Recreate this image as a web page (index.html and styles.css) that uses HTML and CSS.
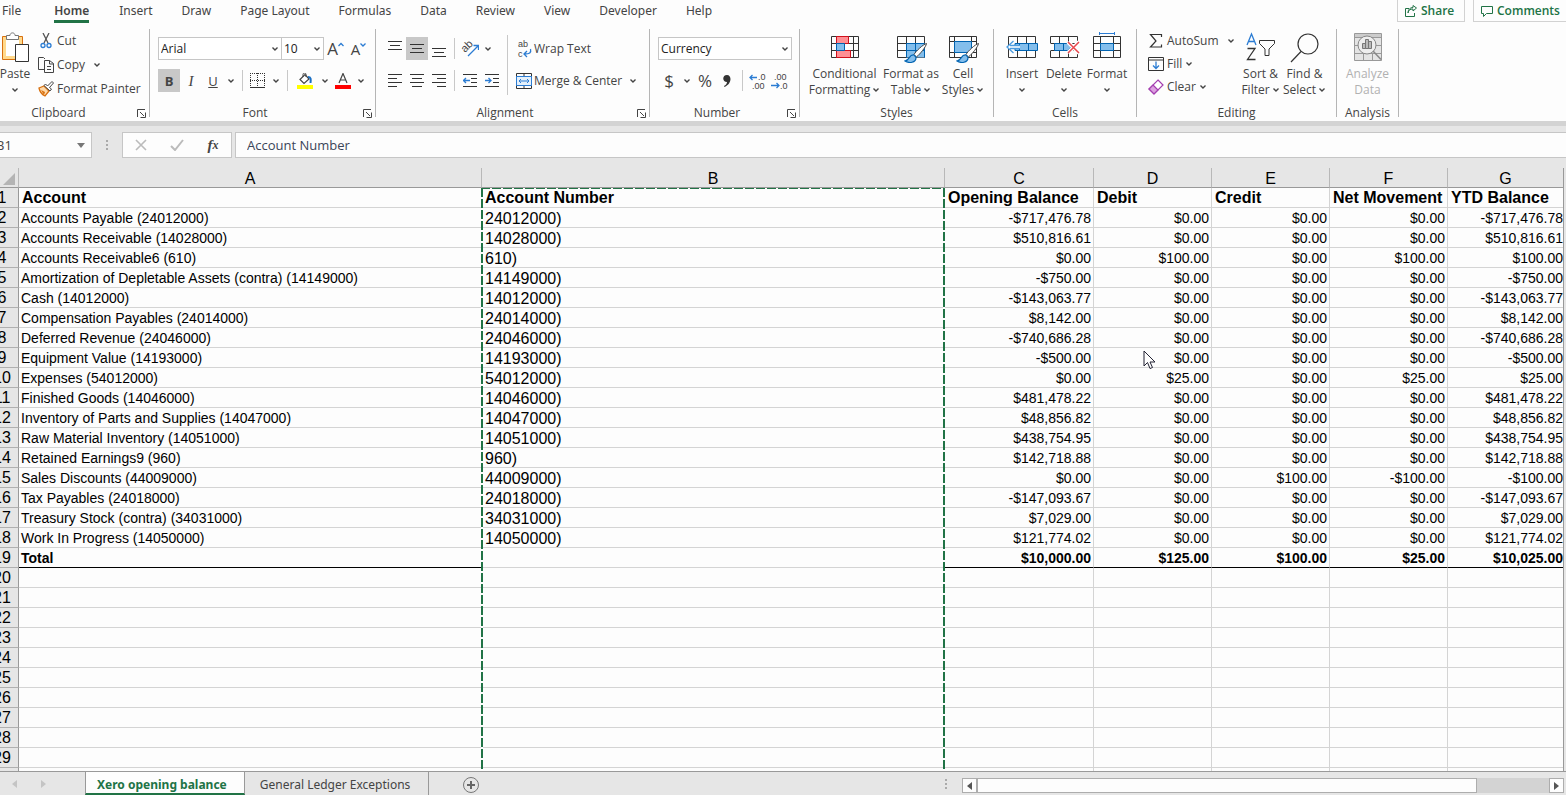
FILE: index.html
```html
<!DOCTYPE html>
<html lang="en">
<head>
    <meta charset="UTF-8">
    <meta name="viewport" content="width=device-width, initial-scale=1.0">
    <title>Xero opening balance</title>
    <link rel="stylesheet" href="styles.css">
</head>
<body>

    <!-- Shared icons -->
    <svg class="sprite" aria-hidden="true">
        <symbol id="chevron" viewBox="0 0 8 8"><path d="M1.5 2.5L4 5l2.5-2.5" fill="none" stroke="#444" stroke-width="1.4"/></symbol>
        <symbol id="launcher" viewBox="0 0 9 9"><path d="M.5 8V.5H8M3 3l4 4M8.500 3.500v5h-5" fill="none" stroke="#444"/></symbol>
        <symbol id="brush" viewBox="0 0 24 20"><path d="M22.500.5C19 1.500 12 8 10 11.500l2.500 2.500C16 11 22 4 22.500.5z" fill="#fff" stroke="#444"/><path d="M10 12c-5-1-4 5-9 6 4 2.500 11 2 11-3.500z" fill="#83beec" stroke="#0063b1" stroke-width="1.2"/></symbol>
    </svg>

    <header class="tab-bar">
        <nav class="tabs">
            <a href="#">File</a>
            <a href="#" class="active">Home</a>
            <a href="#">Insert</a>
            <a href="#">Draw</a>
            <a href="#">Page Layout</a>
            <a href="#">Formulas</a>
            <a href="#">Data</a>
            <a href="#">Review</a>
            <a href="#">View</a>
            <a href="#">Developer</a>
            <a href="#">Help</a>
        </nav>
        <div class="actions">
            <button type="button" class="share">
                <svg width="12" height="12" viewBox="0 0 12 12" fill="none" stroke="#217346"><path d="M4 3.500H.5v8h9V8M3 8c.5-3 2-4 5-4V6l3.500-3L8 .5v2C5 2.500 3 4.500 3 8z"/></svg>
                Share
            </button>
            <button type="button" class="comments">
                <svg width="12" height="12" viewBox="0 0 12 12" fill="none" stroke="#217346"><path d="M.5 1.500h11v7h-6l-3 3v-3h-2z"/></svg>
                Comments
            </button>
        </div>
    </header>

    <div class="ribbon">
        <section class="group clipboard">
            <div class="group-body">
                <button type="button" class="big paste">
                    <svg width="28" height="32" viewBox="0 0 28 32"><path d="M1.500 4.500h20v23h-20z" fill="#ffd98c" stroke="#d8700f"/><path d="M5 8h13v16H5z" fill="#fff"/><path d="M5.500 7.500v-4H9c0-3.500 5-3.500 5 0h3.500v4z" fill="#fff" stroke="#777"/><path d="M14.500 12.500h13v17h-13z" fill="#fff" stroke="#333"/></svg>
                    <span>Paste</span>
                    <svg class="chev"><use href="#chevron"/></svg>
                </button>
                <div class="stack">
                    <button type="button" class="row-btn">
                        <svg width="16" height="16" viewBox="0 0 16 16" fill="none"><path d="M5 0l5 10M11 0L6 10" stroke="#555" stroke-width="1.300"/><circle cx="5" cy="12.500" r="2" stroke="#2b7cd3" stroke-width="1.300"/><circle cx="11" cy="12.500" r="2" stroke="#2b7cd3" stroke-width="1.300"/></svg>
                        Cut
                    </button>
                    <button type="button" class="row-btn">
                        <svg width="16" height="16" viewBox="0 0 16 16" fill="none" stroke="#444"><path d="M6 12.500H.5V.5h5L7 2"/><path d="M6.500 3.500h5l4 3v9h-9zM11.500 3.500v3.500h4M9 9.500h4M9 12.500h4"/></svg>
                        Copy
                        <svg class="chev"><use href="#chevron"/></svg>
                    </button>
                    <button type="button" class="row-btn">
                        <svg width="16" height="16" viewBox="0 0 16 16"><path d="M1 7l5-2 5 5-4 5c-2-1-5-3-6-8z" fill="#ffd9a8" stroke="#d8700f" stroke-width="1.300"/><path d="M3 9l4 2-1 3z" fill="#d8700f"/><path d="M6 4.500l6 5.500 1.500-2-2-1.500L15.500 2 14 .5 9.500 5 7.500 3z" fill="#fff" stroke="#444"/></svg>
                        Format Painter
                    </button>
                </div>
            </div>
            <div class="group-label"><span>Clipboard</span><button type="button" class="launcher" aria-label="Clipboard settings"><svg width="9" height="9"><use href="#launcher"/></svg></button></div>
        </section>

        <section class="group font">
            <div class="group-body lines">
                <div class="line">
                    <label class="combo font-name"><select aria-label="Font"><option>Arial</option></select><svg class="chev"><use href="#chevron"/></svg></label>
                    <label class="combo font-size"><select aria-label="Font size"><option>10</option></select><svg class="chev"><use href="#chevron"/></svg></label>
                    <button type="button" class="tool grow"><span class="letter-big">A</span><svg width="6" height="14" viewBox="0 0 6 14"><path d="M.5 4L3 1.500 5.500 4" fill="none" stroke="#2b7cd3" stroke-width="1.300"/></svg></button>
                    <button type="button" class="tool grow"><span class="letter-mid">A</span><svg width="6" height="14" viewBox="0 0 6 14"><path d="M.5 1.500L3 4l2.500-2.500" fill="none" stroke="#2b7cd3" stroke-width="1.300"/></svg></button>
                </div>
                <div class="line">
                    <button type="button" class="tool pressed bold">B</button>
                    <button type="button" class="tool italic">I</button>
                    <button type="button" class="tool underline">U</button>
                    <button type="button" class="drop" aria-label="Underline options"><svg class="chev"><use href="#chevron"/></svg></button>
                    <span class="sep"></span>
                    <button type="button" class="tool" aria-label="Borders"><svg width="16" height="16" viewBox="0 0 16 16" fill="none" stroke="#333"><path d="M0 .5h15M0 7.500h15" stroke-dasharray="1 1"/><path d="M.5 0v14M7.500 0v14M14.500 0v14" stroke-dasharray="1 1"/><path d="M0 14.500h15"/></svg></button>
                    <button type="button" class="drop" aria-label="Border options"><svg class="chev"><use href="#chevron"/></svg></button>
                    <span class="sep"></span>
                    <button type="button" class="tool fill-color" aria-label="Fill color"><svg width="16" height="16" viewBox="0 0 16 16"><path d="M3 6.500l5-5 4 4.500-5 4.500z" fill="#fff" stroke="#444" stroke-width="1.200"/><path d="M6 4V1.500c0-2 3-2 3 0V4" fill="none" stroke="#444"/><path d="M11 4c3 0 3 2 2.500 6" fill="none" stroke="#1a6fc4" stroke-width="2"/><path d="M0 12h16v4H0z" fill="#ff0"/></svg></button>
                    <button type="button" class="drop" aria-label="Fill options"><svg class="chev"><use href="#chevron"/></svg></button>
                    <button type="button" class="tool" aria-label="Font color"><svg width="16" height="16" viewBox="0 0 16 16"><path d="M4 10L8 .5 12 10M5.500 7h5" fill="none" stroke="#444" stroke-width="1.200"/><path d="M0 12h16v4H0z" fill="#f00"/></svg></button>
                    <button type="button" class="drop" aria-label="Font color options"><svg class="chev"><use href="#chevron"/></svg></button>
                </div>
            </div>
            <div class="group-label"><span>Font</span><button type="button" class="launcher" aria-label="Font settings"><svg width="9" height="9"><use href="#launcher"/></svg></button></div>
        </section>

        <section class="group alignment">
            <div class="group-body align-body">
                <div class="lines">
                    <div class="line">
                        <button type="button" class="tool" aria-label="Top align"><svg width="14" height="16" viewBox="0 0 14 16" stroke="#333"><path d="M0 .5h14M2 4.500h10M0 8.500h14"/></svg></button>
                        <button type="button" class="tool pressed" aria-label="Middle align"><svg width="14" height="16" viewBox="0 0 14 16" stroke="#333"><path d="M0 3.500h14M2 7.500h10M0 11.500h14"/></svg></button>
                        <button type="button" class="tool" aria-label="Bottom align"><svg width="14" height="16" viewBox="0 0 14 16" stroke="#333"><path d="M0 7.500h14M2 11.500h10M0 15.500h14"/></svg></button>
                        <span class="sep"></span>
                        <button type="button" class="tool" aria-label="Orientation"><svg width="18" height="18" viewBox="0 0 18 18" fill="none"><text x="4" y="13" transform="rotate(-45 4 13)" class="ab-icon">ab</text><path d="M7 16L17 6M12.500 5.500h5V10" stroke="#2b7cd3" stroke-width="1.300"/></svg></button>
                        <button type="button" class="drop" aria-label="Orientation options"><svg class="chev"><use href="#chevron"/></svg></button>
                    </div>
                    <div class="line">
                        <button type="button" class="tool" aria-label="Align left"><svg width="14" height="16" viewBox="0 0 14 16" stroke="#333"><path d="M0 1.500h14M0 5.500h9M0 9.500h14M0 13.500h9"/></svg></button>
                        <button type="button" class="tool" aria-label="Center"><svg width="14" height="16" viewBox="0 0 14 16" stroke="#333"><path d="M0 1.500h14M2 5.500h10M0 9.500h14M2 13.500h10"/></svg></button>
                        <button type="button" class="tool" aria-label="Align right"><svg width="14" height="16" viewBox="0 0 14 16" stroke="#333"><path d="M0 1.500h14M5 5.500h9M0 9.500h14M5 13.500h9"/></svg></button>
                        <span class="sep"></span>
                        <button type="button" class="tool" aria-label="Decrease indent"><svg width="14" height="16" viewBox="0 0 14 16" fill="none" stroke="#333"><path d="M0 1.500h14M8 5.500h6M8 9.500h6M0 13.500h14"/><path d="M7 7.500H.5M3 5L.5 7.500 3 10" stroke="#2b7cd3" stroke-width="1.300"/></svg></button>
                        <button type="button" class="tool" aria-label="Increase indent"><svg width="14" height="16" viewBox="0 0 14 16" fill="none" stroke="#333"><path d="M0 1.500h14M8 5.500h6M8 9.500h6M0 13.500h14"/><path d="M0 7.500h6M3.500 5L6 7.500 3.500 10" stroke="#2b7cd3" stroke-width="1.300"/></svg></button>
                    </div>
                </div>
                <span class="sep tall"></span>
                <div class="lines wrap-lines">
                    <button type="button" class="row-btn">
                        <svg width="16" height="20" viewBox="0 0 16 20" fill="none"><text x="2" y="8" class="ab-icon small">ab</text><text x="2" y="18" class="ab-icon small">c</text><path d="M14.500 10c1 4-1 5-6 5M11 12l-3 3 3 3" stroke="#2b7cd3" stroke-width="1.300"/></svg>
                        Wrap Text
                    </button>
                    <button type="button" class="row-btn">
                        <svg width="16" height="16" viewBox="0 0 16 16" fill="none" stroke="#333"><path d="M.5.5h15v15H.5zM8 .5v3M8 12v3.500"/><path d="M.5 3.500h15v9H.5z" stroke="#2b7cd3" fill="#e4f0fb"/><path d="M3 8h10M5 6L3 8l2 2M11 6l2 2-2 2" stroke="#2b7cd3"/></svg>
                        Merge &amp; Center
                        <svg class="chev"><use href="#chevron"/></svg>
                    </button>
                </div>
            </div>
            <div class="group-label"><span>Alignment</span><button type="button" class="launcher" aria-label="Alignment settings"><svg width="9" height="9"><use href="#launcher"/></svg></button></div>
        </section>

        <section class="group number">
            <div class="group-body lines">
                <div class="line">
                    <label class="combo number-format"><select aria-label="Number format"><option>Currency</option></select><svg class="chev"><use href="#chevron"/></svg></label>
                </div>
                <div class="line">
                    <button type="button" class="tool sign">$</button>
                    <button type="button" class="drop" aria-label="Accounting options"><svg class="chev"><use href="#chevron"/></svg></button>
                    <button type="button" class="tool sign">%</button>
                    <button type="button" class="tool" aria-label="Comma style"><svg width="8" height="14" viewBox="0 0 8 14"><path d="M4 1c5 0 5 9-2.500 12l-.5-1c2-1 3-2.500 3-4C-1 8-1 1 4 1z" fill="#333"/></svg></button>
                    <span class="sep"></span>
                    <button type="button" class="tool" aria-label="Increase decimal"><svg width="18" height="18" viewBox="0 0 18 18" fill="none"><text x="9" y="8" class="dec-icon">.0</text><text x="3" y="17" class="dec-icon">.00</text><path d="M8 5.500H1M3.500 3L1 5.500 3.500 8" stroke="#2b7cd3" stroke-width="1.300"/></svg></button>
                    <button type="button" class="tool" aria-label="Decrease decimal"><svg width="18" height="18" viewBox="0 0 18 18" fill="none"><text x="3" y="8" class="dec-icon">.00</text><text x="9" y="17" class="dec-icon">.0</text><path d="M0 13.500h8M5.500 11L8 13.500 5.500 16" stroke="#2b7cd3" stroke-width="1.300"/></svg></button>
                </div>
            </div>
            <div class="group-label"><span>Number</span><button type="button" class="launcher" aria-label="Number settings"><svg width="9" height="9"><use href="#launcher"/></svg></button></div>
        </section>

        <section class="group styles">
            <div class="group-body">
                <button type="button" class="big conditional">
                    <svg width="28" height="32" viewBox="0 0 28 32" fill="none"><path d="M.5 4.500h27v21H.5zM.5 11.500h27M.5 18.500h27M5.500 4.500v21M22.500 4.500v21" stroke="#333"/><path d="M5.500 4.500h12v7h-12zM5.500 18.500h14v7h-14z" fill="#ff8f94" stroke="#d1101c"/><path d="M5.500 11.500h8v7h-8z" fill="#83beec" stroke="#0063b1"/></svg>
                    <span>Conditional</span>
                    <span>Formatting <svg class="chev"><use href="#chevron"/></svg></span>
                </button>
                <button type="button" class="big format-table">
                    <svg width="32" height="32" viewBox="0 0 32 32" fill="none"><path d="M2.500 4.500h27v21h-27zM2.500 11.500h27M2.500 18.500h27M11.500 4.500v21M20.500 4.500v21" stroke="#333"/><path d="M11.500 11.500h18v14h-18z" fill="#83beec"/><path d="M11.500 25.500v-14h18v14M11.500 18.500h18M20.500 11.500v14" stroke="#0063b1"/><use href="#brush" x="9" y="11" width="24" height="20"/></svg>
                    <span>Format as</span>
                    <span>Table <svg class="chev"><use href="#chevron"/></svg></span>
                </button>
                <button type="button" class="big cell-styles">
                    <svg width="32" height="32" viewBox="0 0 32 32" fill="none"><path d="M2.500 4.500h27v21h-27zM2.500 9.500h27M2.500 20.500h27M7.500 4.500v21M24.500 4.500v21" stroke="#333"/><path d="M7.500 9.500h17v11h-17z" fill="#83beec" stroke="#0063b1"/><use href="#brush" x="9" y="11" width="24" height="20"/></svg>
                    <span>Cell</span>
                    <span>Styles <svg class="chev"><use href="#chevron"/></svg></span>
                </button>
            </div>
            <div class="group-label"><span>Styles</span></div>
        </section>

        <section class="group cells">
            <div class="group-body">
                <button type="button" class="big">
                    <svg width="32" height="32" viewBox="0 0 32 32" fill="none"><path d="M2.500 4.500h27v21h-27zM11.500 4.500v21M20.500 4.500v21" stroke="#333"/><path d="M9 11.500h22.500v7H9z" fill="#83beec" stroke="#0063b1"/><path d="M13.500 11.500v7M22.500 11.500v7" stroke="#0063b1"/><path d="M14 13H7V9L.5 15 7 21v-4h7z" fill="#fff"/><path d="M14 13.500H4M14 16.500H4M7.500 9L1 15l6.500 6" stroke="#4a9be0" stroke-width="1.300"/></svg>
                    <span>Insert</span>
                    <svg class="chev"><use href="#chevron"/></svg>
                </button>
                <button type="button" class="big">
                    <svg width="32" height="32" viewBox="0 0 32 32" fill="none"><path d="M2.500 11V4.500h27V11M2.500 19v6.500h27V19M2.500 11.500h27M2.500 18.500h27M11.500 4.500v21M20.500 4.500v21" stroke="#333"/><path d="M6.500 11.500H20l3 3.500-3 3.500H6.500z" fill="#83beec" stroke="#0063b1"/><path d="M15.500 11.500v7" stroke="#0063b1"/><path d="M20 10l11 11M31 10L20 21" stroke="#fff" stroke-width="4"/><path d="M20 10l11 11M31 10L20 21" stroke="#e8474c" stroke-width="1.500"/></svg>
                    <span>Delete</span>
                    <svg class="chev"><use href="#chevron"/></svg>
                </button>
                <button type="button" class="big format-cells">
                    <svg width="28" height="32" viewBox="0 0 28 32" fill="none"><path d="M.5 4.500h27v21H.5zM.5 11.500h27M.5 18.500h27M7.500 4.500v21M20.500 4.500v21" stroke="#333"/><path d="M7.500 11.500h13v7h-13z" fill="#83beec" stroke="#0063b1"/><path d="M6.500 0v3M21.500 0v3M6.500 1.500h15" stroke="#2b7cd3"/></svg>
                    <span>Format</span>
                    <svg class="chev"><use href="#chevron"/></svg>
                </button>
            </div>
            <div class="group-label"><span>Cells</span></div>
        </section>

        <section class="group editing">
            <div class="group-body">
                <div class="stack">
                    <button type="button" class="row-btn">
                        <svg width="16" height="16" viewBox="0 0 16 16" fill="none" stroke="#333" stroke-width="1.200"><path d="M13.500 4V1.500h-11L8 8l-5.500 6h11v-2.500"/></svg>
                        AutoSum
                        <svg class="chev"><use href="#chevron"/></svg>
                    </button>
                    <button type="button" class="row-btn tight">
                        <svg width="16" height="16" viewBox="0 0 16 16" fill="none"><path d="M.5 1.500h15v13H.5zM.5 4h15" stroke="#333"/><path d="M8 5.500V12M5 9.500l3 3 3-3" stroke="#2b7cd3" stroke-width="1.300"/></svg>
                        Fill
                        <svg class="chev"><use href="#chevron"/></svg>
                    </button>
                    <button type="button" class="row-btn tight">
                        <svg width="16" height="16" viewBox="0 0 16 16" stroke="#a43fb0" stroke-width="1.200"><path d="M10 1l5 5-9 9-5-5z" fill="#fff"/><path d="M5 6l5 5-4 4-5-5z" fill="#dca0e0"/></svg>
                        Clear
                        <svg class="chev"><use href="#chevron"/></svg>
                    </button>
                </div>
                <button type="button" class="big sort">
                    <svg width="30" height="32" viewBox="0 0 30 32" fill="none"><path d="M1 13L5.500 2 10 13M2.500 9.500h6" stroke="#2b7cd3" stroke-width="1.300"/><path d="M1.500 16.500H9L1.500 27.500h8" stroke="#333" stroke-width="1.300"/><path d="M13.500 8.500h15v3L23 17v6.500h-4V17l-5.500-5.500z" stroke="#333"/></svg>
                    <span>Sort &amp;</span>
                    <span>Filter <svg class="chev"><use href="#chevron"/></svg></span>
                </button>
                <button type="button" class="big find">
                    <svg width="30" height="32" viewBox="0 0 30 32" fill="none" stroke="#333" stroke-width="1.200"><circle cx="18" cy="12" r="10"/><path d="M11 19.500L1 30"/></svg>
                    <span>Find &amp;</span>
                    <span>Select <svg class="chev"><use href="#chevron"/></svg></span>
                </button>
            </div>
            <div class="group-label"><span>Editing</span></div>
        </section>

        <section class="group analysis">
            <div class="group-body">
                <button type="button" class="big" disabled>
                    <svg width="28" height="32" viewBox="0 0 28 32" fill="none" stroke="#999"><path d="M.5 1.500h27v27H.5z" fill="#e4e4e4"/><path d="M1 2h26v3H1z" fill="#ccc" stroke="none"/><path d="M.5 5.500h27M.5 13.500h27M.5 21.500h27M9.500 21v7M18.500 21v7"/><circle cx="13" cy="13" r="9" fill="#eee" stroke="#888"/><path d="M19 19l8 8.500" stroke="#888" stroke-width="1.500"/><path d="M8.500 11.500h3v5h-3zM11.500 7.500h3v9h-3zM14.500 9.500h3v7h-3z" fill="#bbb" stroke="#777"/></svg>
                    <span>Analyze</span>
                    <span>Data</span>
                </button>
            </div>
            <div class="group-label"><span>Analysis</span></div>
        </section>
    </div>

    <div class="formula-bar">
        <button type="button" class="name-box"><span>B1</span><svg width="8" height="5" viewBox="0 0 8 5"><path d="M0 0h8L4 5z" fill="#777"/></svg></button>
        <span class="dots"></span>
        <div class="formula-tools">
            <button type="button" aria-label="Cancel"><svg width="12" height="12" viewBox="0 0 12 12"><path d="M1 1l10 10M11 1L1 11" stroke="#bbb" stroke-width="1.600"/></svg></button>
            <button type="button" aria-label="Enter"><svg width="14" height="12" viewBox="0 0 14 12"><path d="M1 7l4 4 8-10" fill="none" stroke="#bbb" stroke-width="2"/></svg></button>
            <button type="button" class="fx">f<small>x</small></button>
        </div>
        <input type="text" class="formula" aria-label="Formula" value="Account Number">
    </div>

    <main class="sheet">
        <table>
            <colgroup>
                <col class="col-row"><col><col><col class="col-c"><col class="col-amount"><col class="col-amount"><col class="col-amount"><col class="col-g">
            </colgroup>
            <thead>
                <tr>
                    <th class="corner"><svg width="12" height="12" viewBox="0 0 12 12"><path d="M12 0v12H0z" fill="#b4b4b4"/></svg></th>
                    <th>A</th><th>B</th><th>C</th><th>D</th><th>E</th><th>F</th><th>G</th>
                </tr>
            </thead>
            <tbody id="rows"></tbody>
        </table>
        <svg class="pointer" width="13" height="20" viewBox="0 0 13 20"><path d="M1 1v15l3.500-3.500L7 18.500l2.500-1L7 12h5z" fill="#fff" stroke="#223"/></svg>
    </main>

    <footer class="sheet-bar">
        <div class="sheet-nav">
            <button type="button" aria-label="Previous sheet"><svg width="5" height="8" viewBox="0 0 5 8"><path d="M5 0v8L0 4z" fill="#c4c4c4"/></svg></button>
            <button type="button" aria-label="Next sheet"><svg width="5" height="8" viewBox="0 0 5 8"><path d="M0 0v8l5-4z" fill="#c4c4c4"/></svg></button>
        </div>
        <a href="#" class="sheet-tab active">Xero opening balance</a>
        <a href="#" class="sheet-tab">General Ledger Exceptions</a>
        <button type="button" class="add-sheet" aria-label="New sheet"><svg width="16" height="16" viewBox="0 0 16 16"><circle cx="8" cy="8" r="7.500" fill="none" stroke="#777"/><path d="M8 4v8M4 8h8" stroke="#666" stroke-width="2"/></svg></button>
        <span class="dots"></span>
        <div class="scroll">
            <button type="button" aria-label="Scroll left"><svg width="5" height="8" viewBox="0 0 5 8"><path d="M5 0v8L0 4z" fill="#555"/></svg></button>
            <div class="track"><div class="thumb"></div></div>
            <button type="button" aria-label="Scroll right"><svg width="5" height="8" viewBox="0 0 5 8"><path d="M0 0v8l5-4z" fill="#555"/></svg></button>
        </div>
    </footer>

    <script>
        const rows = [
            ['Account', 'Account Number', 'Opening Balance', 'Debit', 'Credit', 'Net Movement', 'YTD Balance'],
            ['Accounts Payable (24012000)', '24012000)', '-$717,476.78', '$0.00', '$0.00', '$0.00', '-$717,476.78'],
            ['Accounts Receivable (14028000)', '14028000)', '$510,816.61', '$0.00', '$0.00', '$0.00', '$510,816.61'],
            ['Accounts Receivable6 (610)', '610)', '$0.00', '$100.00', '$0.00', '$100.00', '$100.00'],
            ['Amortization of Depletable Assets (contra) (14149000)', '14149000)', '-$750.00', '$0.00', '$0.00', '$0.00', '-$750.00'],
            ['Cash (14012000)', '14012000)', '-$143,063.77', '$0.00', '$0.00', '$0.00', '-$143,063.77'],
            ['Compensation Payables (24014000)', '24014000)', '$8,142.00', '$0.00', '$0.00', '$0.00', '$8,142.00'],
            ['Deferred Revenue (24046000)', '24046000)', '-$740,686.28', '$0.00', '$0.00', '$0.00', '-$740,686.28'],
            ['Equipment Value (14193000)', '14193000)', '-$500.00', '$0.00', '$0.00', '$0.00', '-$500.00'],
            ['Expenses (54012000)', '54012000)', '$0.00', '$25.00', '$0.00', '$25.00', '$25.00'],
            ['Finished Goods (14046000)', '14046000)', '$481,478.22', '$0.00', '$0.00', '$0.00', '$481,478.22'],
            ['Inventory of Parts and Supplies (14047000)', '14047000)', '$48,856.82', '$0.00', '$0.00', '$0.00', '$48,856.82'],
            ['Raw Material Inventory (14051000)', '14051000)', '$438,754.95', '$0.00', '$0.00', '$0.00', '$438,754.95'],
            ['Retained Earnings9 (960)', '960)', '$142,718.88', '$0.00', '$0.00', '$0.00', '$142,718.88'],
            ['Sales Discounts (44009000)', '44009000)', '$0.00', '$0.00', '$100.00', '-$100.00', '-$100.00'],
            ['Tax Payables (24018000)', '24018000)', '-$147,093.67', '$0.00', '$0.00', '$0.00', '-$147,093.67'],
            ['Treasury Stock (contra) (34031000)', '34031000)', '$7,029.00', '$0.00', '$0.00', '$0.00', '$7,029.00'],
            ['Work In Progress (14050000)', '14050000)', '$121,774.02', '$0.00', '$0.00', '$0.00', '$121,774.02'],
            ['Total', '', '$10,000.00', '$125.00', '$100.00', '$25.00', '$10,025.00']
        ];

        const body = document.getElementById('rows');
        const ROW_COUNT = 30;

        for (let i = 0; i < ROW_COUNT; i++) {
            const tr = document.createElement('tr');
            if (i === 0) tr.className = 'titles';
            if (i === rows.length - 1) tr.className = 'total';

            const th = document.createElement('th');
            const num = document.createElement('span');
            num.textContent = i + 1;
            th.appendChild(num);
            tr.appendChild(th);

            for (let c = 0; c < 7; c++) {
                const td = document.createElement('td');
                td.textContent = rows[i] ? rows[i][c] : '';
                tr.appendChild(td);
            }
            body.appendChild(tr);
        }

        // Copy outline around column B
        const outline = document.createElement('div');
        outline.className = 'copy-outline';
        body.rows[0].cells[2].appendChild(outline);
    </script>

</body>
</html>
```

FILE: styles.css
```css
* {
    box-sizing: border-box;
}

body {
    margin: 0;
    height: 100vh;
    display: flex;
    flex-direction: column;
    overflow: hidden;
    background-color: #e6e6e6;
    color: #444;
    font-family: "Open Sans", "Noto Sans", sans-serif;
    font-size: 12px;
    line-height: 16px;
}

button {
    margin: 0;
    padding: 0;
    border: none;
    background: none;
    color: inherit;
    font: inherit;
    white-space: nowrap;
}

svg {
    display: block;
    flex: none;
}

a {
    color: inherit;
    text-decoration: none;
}

.sprite {
    position: absolute;
    width: 0;
    height: 0;
}

.chev {
    width: 8px;
    height: 8px;
}

/* Tabs */
.tab-bar {
    display: flex;
    justify-content: space-between;
    height: 25px;
    background-color: #fdfdfd;
}

.tabs {
    display: flex;
    gap: 29px;
    padding-left: 2px;
    font-family: "Noto Sans", sans-serif;
    white-space: nowrap;
}

.tabs a {
    height: 23px;
    padding-top: 3px;
}

.tabs .active {
    margin-left: 4px;
    margin-right: 1px;
    font-weight: 600;
    border-bottom: 3px solid #217346;
}

.actions {
    display: flex;
    gap: 8px;
}

.actions button {
    display: flex;
    align-items: center;
    gap: 4px;
    height: 22px;
    padding-left: 7px;
    border: 1px solid #d2d2d2;
    border-top: none;
    color: #217346;
    font-weight: 600;
}

.share {
    width: 68px;
}

.actions .comments {
    width: 93px;
    border-right: none;
}

/* Ribbon */
.ribbon {
    display: flex;
    height: 101px;
    padding-top: 4px;
    background-color: #fdfdfd;
    border-bottom: 5px solid #d3d3d3;
}

.group {
    display: flex;
    flex-direction: column;
    flex: none;
    height: 88px;
    border-right: 1px solid #b5b5b5;
}

.group-body {
    display: flex;
    flex: none;
    height: 76px;
}

.group-label {
    display: flex;
    align-items: center;
    flex: none;
    height: 16px;
    text-align: center;
}

.group-label span {
    flex: 1;
}

.launcher {
    width: 15px;
    padding-left: 3px;
}

.clipboard { width: 150px; }
.font { width: 226px; }
.alignment { width: 274px; }
.number { width: 150px; }
.styles { width: 194px; }
.cells { width: 143px; }
.editing { width: 200px; }
.analysis { width: 62px; }

.clipboard .group-label span {
    margin-left: -17px;
}

.big {
    display: flex;
    flex-direction: column;
    align-items: center;
    width: 42px;
    padding-top: 3px;
}

.big > svg:first-child {
    margin-bottom: 2px;
}

.big > .chev {
    margin-top: 4px;
}

.big span {
    display: flex;
    align-items: center;
    gap: 2px;
}

.big:disabled {
    color: #b1b1b1;
}

.paste {
    width: 30px;
}

.stack {
    display: flex;
    flex-direction: column;
    align-items: flex-start;
}

.row-btn {
    display: flex;
    align-items: center;
    gap: 3px;
    height: 24px;
}

.row-btn .chev {
    margin-left: 5px;
}

.row-btn.tight .chev {
    margin-left: 0;
}

.clipboard .stack {
    margin-left: 8px;
}

.lines {
    display: flex;
    flex-direction: column;
    gap: 9px;
    padding: 8px 0 0 8px;
}

.line {
    display: flex;
    align-items: center;
    height: 23px;
}

.combo {
    display: flex;
    align-items: center;
    position: relative;
    height: 23px;
    border: 1px solid #c6c6c6;
    background-color: #fff;
}

.combo select {
    width: 100%;
    height: 21px;
    padding: 0 2px;
    border: none;
    appearance: none;
    background: none;
    color: #222;
    font: inherit;
}

.combo .chev {
    position: absolute;
    right: 2px;
}

.font-name { width: 124px; }
.font-size { width: 43px; margin-left: -1px; }
.number-format { width: 134px; }

.tool {
    display: flex;
    align-items: center;
    justify-content: center;
    width: 22px;
    height: 23px;
}

.grow {
    width: 23px;
}

.fill-color {
    width: 26px;
}

.letter-big {
    font-size: 17px;
}

.letter-mid {
    font-size: 15px;
}

.pressed {
    background-color: #c8c8c8;
}

.bold {
    font-size: 13px;
    font-weight: 700;
}

.italic {
    font-family: "Liberation Serif", serif;
    font-size: 15px;
    font-style: italic;
}

.underline {
    font-size: 13px;
    text-decoration: underline;
}

.drop {
    display: flex;
    justify-content: center;
    width: 14px;
}

.sep {
    width: 1px;
    height: 21px;
    margin: 0 4px;
    background-color: #c8c8c8;
}

.tall {
    height: 60px;
    margin: 6px 0 0 4px;
}

.wrap-lines .row-btn {
    height: 23px;
    gap: 2px;
}

.sign {
    font-size: 17px;
}

.ab-icon {
    fill: #444;
    font-family: "Liberation Sans", sans-serif;
    font-size: 11px;
}

.ab-icon.small {
    font-size: 9px;
}

.dec-icon {
    fill: #444;
    font-family: "Liberation Sans", sans-serif;
    font-size: 9px;
}

.styles .group-body,
.cells .group-body {
    padding-left: 7px;
}

.conditional { width: 75px; }
.format-table { width: 58px; }
.cell-styles { width: 46px; }
.format-cells { width: 44px; }

.editing .stack {
    width: 91px;
    margin-left: 11px;
}

.editing .row-btn {
    height: 23px;
}

.sort { width: 43px; }
.find { width: 45px; }

.analysis .group-body {
    justify-content: center;
}

/* Formula bar */
.formula-bar {
    display: flex;
    align-items: center;
    height: 42px;
    padding-bottom: 4px;
    font-size: 13px;
}

.name-box {
    display: flex;
    align-items: center;
    justify-content: space-between;
    width: 92px;
    height: 26px;
    padding-right: 6px;
    border: 1px solid #c6c6c6;
    border-left: none;
    background-color: #fdfdfd;
}

.name-box span {
    margin-left: -4px;
}

.dots {
    flex: none;
    width: 2px;
    height: 10px;
    background: repeating-linear-gradient(#aaa 0 2px, transparent 2px 4px);
}

.formula-bar .dots {
    margin: 0 14px;
}

.formula-tools {
    display: flex;
    align-items: center;
    width: 110px;
    height: 26px;
    border: 1px solid #c6c6c6;
    background-color: #fdfdfd;
}

.formula-tools button {
    display: flex;
    justify-content: center;
    width: 36px;
}

.formula-tools .fx {
    font-family: "Liberation Serif", serif;
    font-size: 15px;
    font-style: italic;
    font-weight: 700;
}

.fx small {
    font-size: 12px;
}

.formula {
    flex: 1;
    height: 26px;
    margin-left: 3px;
    padding: 0 11px;
    border: 1px solid #c6c6c6;
    border-right: none;
    background-color: #fdfdfd;
    color: #3b4559;
    font: inherit;
}

/* Sheet */
.sheet {
    flex: 1;
    min-height: 0;
    position: relative;
    overflow: hidden;
    padding-right: 2px;
    color: #000;
    font-family: "Liberation Sans", Arial, sans-serif;
}

.sheet table {
    width: 100%;
    table-layout: fixed;
    border-collapse: separate;
    border-spacing: 0;
    background-color: #fdfdfd;
    border-right: 1px solid #999;
}

.col-row { width: 19px; }
.col-c { width: 149px; }
.col-amount { width: 118px; }
.col-g { width: 115px; }

.sheet th {
    height: 20px;
    padding: 0;
    background-color: #e6e6e6;
    border-right: 1px solid #b8b8b8;
    border-bottom: 1px solid #999;
    font-size: 16px;
    font-weight: 400;
    line-height: 19px;
}

.sheet thead th {
    padding-top: 2px;
    line-height: 17px;
}

.sheet thead th:last-child {
    border-right: none;
}

.corner svg {
    margin-left: 3px;
}

.sheet tbody th {
    overflow: hidden;
    border-right-color: #999;
    border-bottom-color: #b0b0b0;
}

.sheet tbody th span {
    display: block;
    width: 34px;
    margin-left: -15px;
    text-align: center;
}

.sheet td {
    height: 20px;
    padding: 2px 2px 0;
    border-right: 1px solid #d4d4d4;
    border-bottom: 1px solid #d4d4d4;
    font-size: 14px;
    line-height: 17px;
    text-align: right;
    white-space: nowrap;
}

.sheet td:nth-child(2),
.sheet td:nth-child(3) {
    text-align: left;
}

.sheet td:nth-child(3) {
    padding-left: 3px;
    font-size: 16px;
}

.sheet td:last-child {
    padding-right: 0;
    border-right: none;
}

.sheet .titles td {
    position: relative;
    padding-top: 0;
    padding-left: 3px;
    font-size: 16px;
    font-weight: 700;
    line-height: 19px;
    text-align: left;
}

.total td {
    border-bottom-color: #000;
    font-weight: 700;
}

.total td:nth-child(3) {
    border-bottom-color: #d4d4d4;
}

.copy-outline {
    position: absolute;
    top: 0;
    left: -1px;
    right: -1px;
    height: 100vh;
    background:
        repeating-linear-gradient(90deg, #217346 0 9px, #fdfdfd 9px 11px) top / 100% 1px no-repeat,
        repeating-linear-gradient(#217346 0 9px, #fdfdfd 9px 11px) left / 2px 100% no-repeat,
        repeating-linear-gradient(#217346 0 9px, #fdfdfd 9px 11px) right / 2px 100% no-repeat;
}

.pointer {
    position: absolute;
    top: 182px;
    right: 410px;
}

/* Sheet tabs */
.sheet-bar {
    display: flex;
    align-items: center;
    height: 24px;
    border-top: 1px solid #999;
    font-family: "Noto Sans", sans-serif;
}

.sheet-nav {
    display: flex;
    gap: 24px;
    width: 85px;
    padding-left: 12px;
}

.sheet-tab {
    height: 23px;
    padding: 5px 18px 0 15px;
    border-right: 1px solid #999;
}

.sheet-tab.active {
    padding: 5px 17px 0 11px;
    border-left: 1px solid #999;
    border-bottom: 2px solid #217346;
    background-color: #fdfdfd;
    color: #217346;
    font-weight: 700;
}

.add-sheet {
    margin: 3px auto 0 34px;
}

.scroll {
    display: flex;
    width: 602px;
    height: 15px;
    margin: 4px 2px 0 15px;
    background-color: #d3d3d3;
}

.scroll button {
    display: flex;
    align-items: center;
    justify-content: center;
    width: 15px;
    border: 1px solid #adadad;
    background-color: #fdfdfd;
}

.track {
    flex: 1;
}

.thumb {
    width: 500px;
    height: 15px;
    border: 1px solid #adadad;
    background-color: #fdfdfd;
}
```
